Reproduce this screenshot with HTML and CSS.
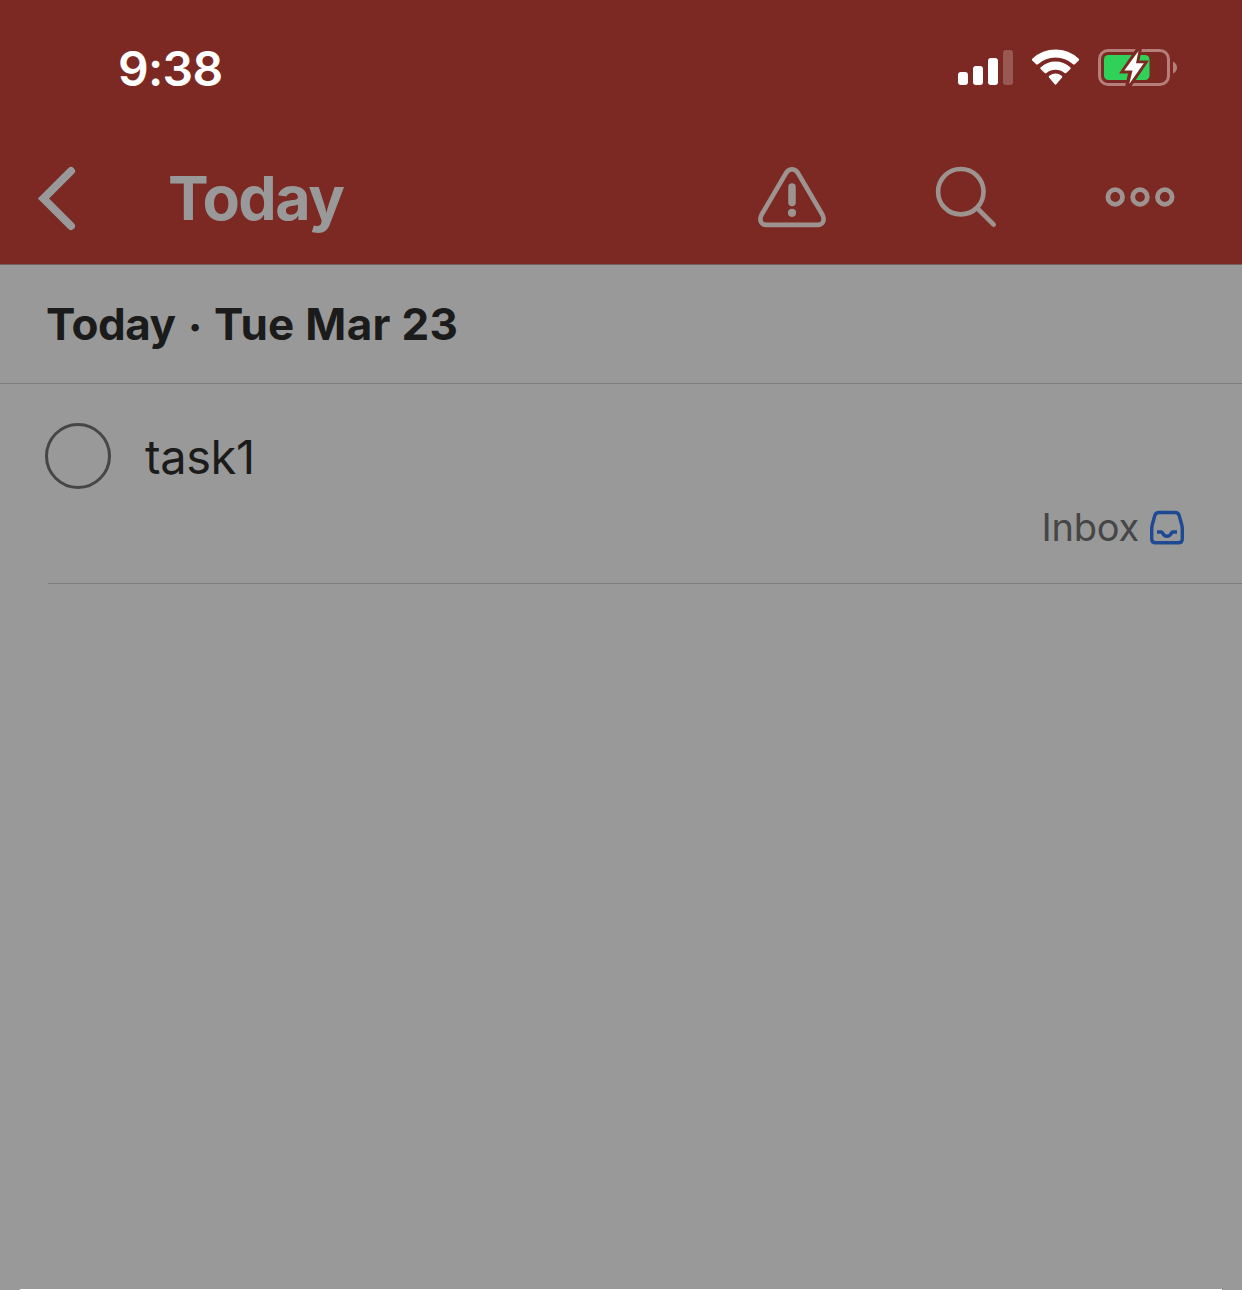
FILE: index.html
```html
<!DOCTYPE html>
<html lang="en">
<head>
<meta charset="utf-8">
<title>Today</title>
<link rel="stylesheet" href="styles.css">
</head>
<body>
<div class="screen">
  <header class="top">
    <div class="status">
      <span class="time">9:38</span>
      <svg class="status-icons" width="222" height="40" viewBox="956 48 222 40">
        <g fill="#fff">
          <rect x="958" y="72" width="10" height="13" rx="3"/>
          <rect x="973" y="66" width="10" height="19" rx="3"/>
          <rect x="988" y="58" width="10" height="27" rx="3"/>
          <rect x="1003" y="50" width="10" height="35" rx="3" opacity=".22"/>
          <path d="M1032.300 60.500Q1031.500 59.500 1032.500 58.600A33.500 33.500 0 0 1 1078.500 58.600Q1079.500 59.500 1078.700 60.500L1074.800 64.300Q1074 65 1073.100 64.300A26.500 26.500 0 0 0 1037.900 64.300Q1037 65 1036.200 64.300Z"/>
          <path d="M1040.600 69Q1039.800 68 1040.800 67.200A22 22 0 0 1 1070.200 67.200Q1071.200 68 1070.400 69L1066.300 73Q1065.500 73.700 1064.500 73A14 14 0 0 0 1046.500 73Q1045.500 73.700 1044.700 73Z"/>
          <path d="M1049 77.500Q1048.300 76.600 1049.300 75.800A10.500 10.500 0 0 1 1061.700 75.800Q1062.700 76.600 1062 77.500L1056.300 84.300Q1055.500 85.200 1054.700 84.300Z"/>
        </g>
        <rect x="1099.500" y="50.500" width="69" height="34" rx="8.500" fill="none" stroke="#b67f7c" stroke-width="3"/>
        <path d="M1173 61.500Q1177 63.500 1177 67.500T1173 73.500Z" fill="#b67f7c"/>
        <rect x="1104" y="55" width="45.500" height="25" rx="4.500" fill="#30d158"/>
        <path d="M1136.500 48H1142L1139.500 60.500H1149L1131 87H1125L1128 73.500H1119Z" fill="#7c2923"/>
        <path d="M1138.500 51L1124.300 70.600H1132.500L1129.200 84L1143.800 63.200H1136Z" fill="#fff"/>
      </svg>
    </div>
    <nav class="bar">
      <svg class="back" width="40" height="66" viewBox="37 165 40 66" fill="none" stroke="#999" stroke-width="8" stroke-linecap="round"><path d="M71 171L43.500 198.500L71 226"/></svg>
      <h1 class="title">Today</h1>
      <svg class="warn" width="70" height="64" viewBox="757 166 70 64" fill="none" stroke="#9d9391" stroke-width="4.600">
        <path d="M786.200 172.800Q788.500 169.200 792 169.200T797.800 172.800L822.300 214.500Q824.500 218.500 823 222Q821.500 224.900 817.500 224.900H766.500Q762.500 224.900 761 222Q759.500 218.500 761.700 214.500Z"/>
        <path d="M792 187V202.500" stroke-width="7.500" stroke-linecap="round"/>
        <circle cx="792" cy="212.800" r="4.100" fill="#9d9391" stroke="none"/>
      </svg>
      <svg class="search" width="64" height="64" viewBox="934 166 64 64" fill="none" stroke="#9d9391" stroke-width="4.600" stroke-linecap="round">
        <circle cx="960.800" cy="191.700" r="22.700"/><path d="M977.500 208.500L993.700 224.700"/>
      </svg>
      <svg class="more" width="72" height="22" viewBox="1104 187 72 22" fill="none" stroke="#9d9391" stroke-width="4.800">
        <circle cx="1115.200" cy="197" r="7.300"/><circle cx="1140" cy="197" r="7.300"/><circle cx="1164.800" cy="197" r="7.300"/>
      </svg>
    </nav>
  </header>
  <h2 class="section"><span class="day">Today</span><span class="dot">·</span><span class="date">Tue Mar 23</span></h2>
  <main class="tasks">
    <article class="task">
      <div class="task-main"><span class="check"></span><span class="task-name">task1</span></div>
      <div class="project">
        <span class="project-name">Inbox</span>
        <svg width="36" height="36" viewBox="1149 510 36 36" fill="none" stroke="#1e4a94" stroke-width="3.400" stroke-linejoin="round">
          <path d="M1159 512.500H1175Q1178.200 512.500 1179.200 515.500L1181.800 525Q1182.300 527 1182.300 529.500V539Q1182.300 542.800 1178.500 542.800H1155.500Q1151.700 542.800 1151.700 539V529.500Q1151.700 527 1152.200 525L1154.800 515.500Q1155.800 512.500 1159 512.500Z"/>
          <path d="M1157 532H1161.500C1163 532 1162.500 536.300 1167 536.300S1171 532 1172.500 532H1177"/>
        </svg>
      </div>
    </article>
  </main>
  <div class="sheet"></div>
</div>
</body>
</html>
```
FILE: styles.css
```css
* { box-sizing: border-box; }
body { margin: 0; font-family: Inter, "Liberation Sans", sans-serif; }
h1, h2 { margin: 0; }
svg { display: block; flex: none; }
.screen { display: flex; flex-direction: column; width: 1242px; height: 1290px; background: #999; overflow: hidden; }
.top { height: 265px; background: #7c2923; border-bottom: 1px solid #78605e; flex: none; }
.status { display: flex; justify-content: space-between; align-items: center; height: 136px; padding: 0 64px 0 118px; }
.time { padding-top: 2px; color: #fff; font-size: 48px; font-weight: 600; line-height: 60px; letter-spacing: -0.7px; }
.bar { display: flex; align-items: center; height: 124px; padding: 0 66px 0 37px; color: #999; }
.title { margin-left: 91px; margin-right: auto; font-size: 61px; font-weight: 700; line-height: 76px; letter-spacing: -1.5px; }
.search { margin-left: 107px; }
.more { margin-left: 106px; }
.section { display: flex; align-items: center; height: 119px; padding-left: 46px; border-bottom: 1px solid #7d7d7d; color: #1b1b1b; font-size: 44px; font-weight: 700; line-height: 60px; flex: none; }
.day { width: 130px; letter-spacing: -0.5px; }
.dot { width: 38px; padding-top: 6px; text-align: center; }
.date { letter-spacing: 0.3px; }
.tasks { flex: 1; padding-left: 48px; }
.task { height: 200px; padding-top: 39px; border-bottom: 1px solid #7d7d7d; }
.task-main { display: flex; align-items: center; gap: 34px; height: 66px; margin-left: -3px; }
.check { width: 66px; height: 66px; border: 3px solid #464646; border-radius: 50%; }
.task-name { padding-top: 1px; color: #1b1b1b; font-size: 47px; line-height: 60px; letter-spacing: -0.4px; }
.project { display: flex; justify-content: flex-end; align-items: center; gap: 10px; height: 48px; margin-top: 15px; padding-right: 57px; }
.project-name { padding-bottom: 2px; color: #464646; font-size: 38px; line-height: 46px; letter-spacing: -0.2px; }
.sheet { height: 1px; margin: 0 20px; background: #fff; flex: none; }
```
